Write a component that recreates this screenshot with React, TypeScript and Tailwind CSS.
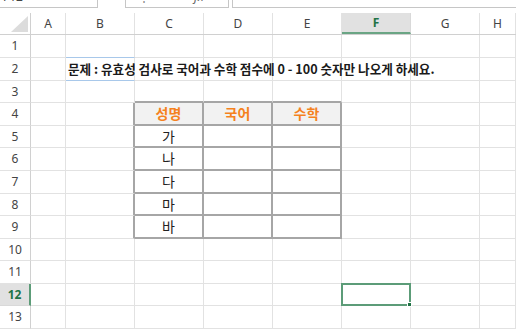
import React from "react";

const cols = ["A", "B", "C", "D", "E", "F", "G", "H"];
const colW = ["w-[35px]", "w-[69px]", "w-[69px]", "w-[69px]", "w-[69px]", "w-[69px]", "w-[69px]", "flex-1"];
const rowH = [
  "h-[23px]", "h-[23px]", "h-[22px]", "h-[23px]", "h-[22px]", "h-[23px]", "h-[23px]",
  "h-[22px]", "h-[23px]", "h-[22px]", "h-[23px]", "h-[22px]", "h-[23px]",
];

const names: Record<number, string> = { 5: "가", 6: "나", 7: "다", 8: "마", 9: "바" };
const heads = ["성명", "국어", "수학"];

const kr = "font-['Noto_Sans_CJK_KR','Noto_Sans',sans-serif]";

function cellClass(r: number, c: number) {
  const inTable = r >= 4 && r <= 9 && c >= 2 && c <= 4;
  const leftOfTable = r >= 4 && r <= 9 && c === 1;
  const aboveTable = r === 3 && c >= 2 && c <= 4;
  const right = inTable || leftOfTable ? "border-r-2 border-r-[#a6a6a6]" : "border-r border-r-[#e2e2e2]";
  let bottom = "border-b border-b-[#e2e2e2]";
  if (inTable || aboveTable) bottom = "border-b-2 border-b-[#a6a6a6]";
  else if (c === 1 && (r === 1 || r === 2)) bottom = "border-b border-b-[#a8c8ea]";
  const bg = r === 4 && inTable ? "bg-[#f2f2f2]" : "bg-white";
  return `${colW[c]} ${right} ${bottom} ${bg} relative flex items-center justify-center shrink-0`;
}

function Cell({ r, c }: { r: number; c: number }) {
  let content: React.ReactNode = null;
  if (r === 2 && c === 1) {
    content = (
      <span className={`absolute left-[2px] z-10 whitespace-nowrap text-[12.6px] font-bold text-[#1a1a1a] ${kr}`}>
        문제 : 유효성 검사로 국어과 수학 점수에 0 - 100 숫자만 나오게 하세요.
      </span>
    );
  } else if (r === 4 && c >= 2 && c <= 4) {
    content = <span className={`text-[14px] font-bold text-[#f5821f] ${kr}`}>{heads[c - 2]}</span>;
  } else if (c === 2 && names[r]) {
    content = <span className={`text-[14px] text-[#222] ${kr}`}>{names[r]}</span>;
  } else if (r === 12 && c === 5) {
    content = (
      <div className="absolute -left-px -top-px right-[-1px] bottom-[-1px] border-2 border-[#5c9c78] z-10">
        <div className="absolute -right-[3px] -bottom-[3px] w-[5px] h-[5px] bg-[#217346] border border-white" />
      </div>
    );
  }
  return <div className={cellClass(r, c)}>{content}</div>;
}

export default function App() {
  return (
    <div className="w-[516px] h-[329px] overflow-hidden bg-white font-['Noto_Sans',sans-serif] select-none">
      {/* formula bar, cut off at top */}
      <div className="flex h-[13px] items-start">
        <div className="w-[98px] h-[8px] border-r border-b border-[#c6c6c6] overflow-hidden flex items-start pl-[3px]">
          <span className="text-[12px] leading-[12px] -mt-[9px] text-[#444]">F12</span>
        </div>
        <div className="w-[27px]" />
        <div className="w-[104px] h-[8px] border-l border-r border-b border-[#c6c6c6] overflow-hidden flex items-start gap-[9px] pl-[12px]">
          <span className="text-[12px] leading-[12px] -mt-[9px] text-[#888]">⋮</span>
          <span className="text-[12px] leading-[12px] -mt-[9px] text-[#888]">×</span>
          <span className="text-[12px] leading-[12px] -mt-[9px] text-[#888]">✓</span>
          <span className="text-[12px] leading-[12px] -mt-[9px] italic text-[#666]">fx</span>
        </div>
        <div className="w-[3px]" />
        <div className="flex-1 h-[8px] border-l border-b border-[#c6c6c6]" />
      </div>

      {/* column headers */}
      <div className="flex h-[22px] border-b border-[#d0d0d0]">
        <div className="w-[31px] shrink-0 border-r border-[#d0d0d0] flex items-end justify-end pr-[2px] pb-[2px]">
          <svg width="17" height="16" viewBox="0 0 17 16">
            <polygon points="17,0 17,16 0,16" fill="#dcdcdc" />
          </svg>
        </div>
        {cols.map((l, c) =>
          l === "F" ? (
            <div
              key={l}
              className={`${colW[c]} shrink-0 border-r border-[#d9d9d9] bg-[#e1e1e1] border-b-2 border-b-[#6aa584] flex items-center justify-center text-[12px] font-bold text-[#217346]`}
            >
              {l}
            </div>
          ) : (
            <div
              key={l}
              className={`${colW[c]} shrink-0 border-r border-[#e2e2e2] flex items-center justify-center text-[12px] text-[#444]`}
            >
              {l}
            </div>
          )
        )}
      </div>

      {/* rows */}
      {rowH.map((h, i) => {
        const r = i + 1;
        const sel = r === 12;
        return (
          <div key={r} className={`flex ${h}`}>
            <div
              className={
                sel
                  ? "w-[31px] shrink-0 border-r-2 border-r-[#5c9c78] border-b border-b-[#d9d9d9] bg-[#e1e1e1] flex items-center justify-center text-[12px] font-bold text-[#217346]"
                  : "w-[31px] shrink-0 border-r border-r-[#d0d0d0] border-b border-b-[#e2e2e2] flex items-center justify-center text-[12px] text-[#444]"
              }
            >
              {r}
            </div>
            {cols.map((_, c) => (
              <Cell key={c} r={r} c={c} />
            ))}
          </div>
        );
      })}
    </div>
  );
}
